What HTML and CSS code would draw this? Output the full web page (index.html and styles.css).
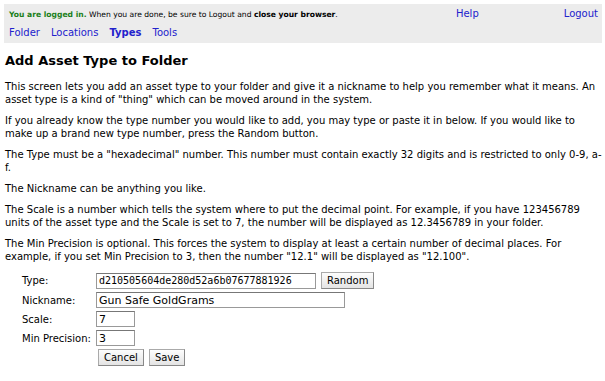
FILE: index.html
```html
<!DOCTYPE html>
<html lang="en">
<head>
    <meta charset="UTF-8">
    <title>Add Asset Type to Folder</title>
    <link rel="stylesheet" href="styles.css">
</head>
<body>
    <div class="topbar">
        <div class="status-row">
            <span class="msg"><span class="ok">You are logged in.</span> When you are done, be sure to Logout and <b>close your browser</b>.</span>
            <a href="#" class="help">Help</a>
            <a href="#" class="logout">Logout</a>
        </div>
        <div class="nav">
            <a href="#">Folder</a>
            <a href="#">Locations</a>
            <a href="#" class="current">Types</a>
            <a href="#">Tools</a>
        </div>
    </div>

    <h1>Add Asset Type to Folder</h1>

    <p>This screen lets you add an asset type to your folder and give it a nickname to help you remember what it means. An asset type is a kind of "thing" which can be moved around in the system.</p>

    <p>If you already know the type number you would like to add, you may type or paste it in below. If you would like to make up a brand new type number, press the Random button.</p>

    <p>The Type must be a "hexadecimal" number. This number must contain exactly 32 digits and is restricted to only 0-9, a-f.</p>

    <p>The Nickname can be anything you like.</p>

    <p>The Scale is a number which tells the system where to put the decimal point. For example, if you have 123456789 units of the asset type and the Scale is set to 7, the number will be displayed as 12.3456789 in your folder.</p>

    <p>The Min Precision is optional. This forces the system to display at least a certain number of decimal places. For example, if you set Min Precision to 3, then the number "12.1" will be displayed as "12.100".</p>

    <form class="form">
        <label>Type:</label>
        <div class="field">
            <input type="text" class="hex" value="d210505604de280d52a6b07677881926">
            <button type="button" class="btn">Random</button>
        </div>
        <label>Nickname:</label>
        <div class="field"><input type="text" class="name" value="Gun Safe GoldGrams"></div>
        <label>Scale:</label>
        <div class="field"><input type="text" class="short" value="7"></div>
        <label>Min Precision:</label>
        <div class="field"><input type="text" class="short" value="3"></div>
        <span></span>
        <div class="field actions">
            <button type="button" class="btn">Cancel</button>
            <button type="button" class="btn">Save</button>
        </div>
    </form>
</body>
</html>
```

FILE: styles.css
```css
body {
    font-family: "DejaVu Sans", Verdana, sans-serif;
    font-size: 10px;
    color: #000;
    background: #fff;
    margin: 4px 3px 0 4px;
}
a {
    color: #2222cc;
    text-decoration: none;
}
.topbar {
    background: #ececec;
    padding: 2px 4px 2px 5px;
}
.status-row {
    display: flex;
    align-items: baseline;
    font-size: 7.6px;
    height: 17px;
    line-height: 15px;
}
.status-row .msg {
    flex: 1;
}
.ok {
    color: #1a7f1a;
    font-weight: bold;
}
.status-row a {
    font-size: 10px;
}
.help {
    margin-right: 85px;
}
.nav {
    display: flex;
    gap: 11px;
    font-size: 10px;
    height: 18px;
    align-items: center;
}
.nav .current {
    font-weight: bold;
}
h1 {
    font-size: 13px;
    line-height: 15px;
    margin: 10px 0 12px 1px;
}
p {
    margin: 0 0 8px 1px;
    line-height: 13px;
}
.form {
    display: grid;
    grid-template-columns: 74px auto;
    row-gap: 3px;
    margin: 9px 0 0 18px;
    align-items: center;
}
.form label {
    font-size: 10px;
}
.field {
    display: flex;
    align-items: center;
    gap: 5px;
}
input {
    height: 16px;
    box-sizing: border-box;
    border: 1px solid #999;
    border-top-color: #777;
    padding: 0 2px;
    font-size: 11px;
    margin: 0;
}
.hex {
    width: 220px;
    font-family: "DejaVu Sans Mono", Monaco, monospace;
    font-size: 10px;
}
.name {
    width: 249px;
    font-family: "DejaVu Sans", sans-serif;
}
.short {
    width: 39px;
    font-family: "DejaVu Sans", sans-serif;
}
.btn {
    font-family: "DejaVu Sans", sans-serif;
    font-size: 10px;
    height: 17px;
    padding: 0 5px;
    background: linear-gradient(#fdfdfd, #e4e4e4);
    border: 1px solid #aaa;
    border-right-color: #888;
    border-bottom-color: #888;
}
.actions {
    padding-left: 2px;
}
```
